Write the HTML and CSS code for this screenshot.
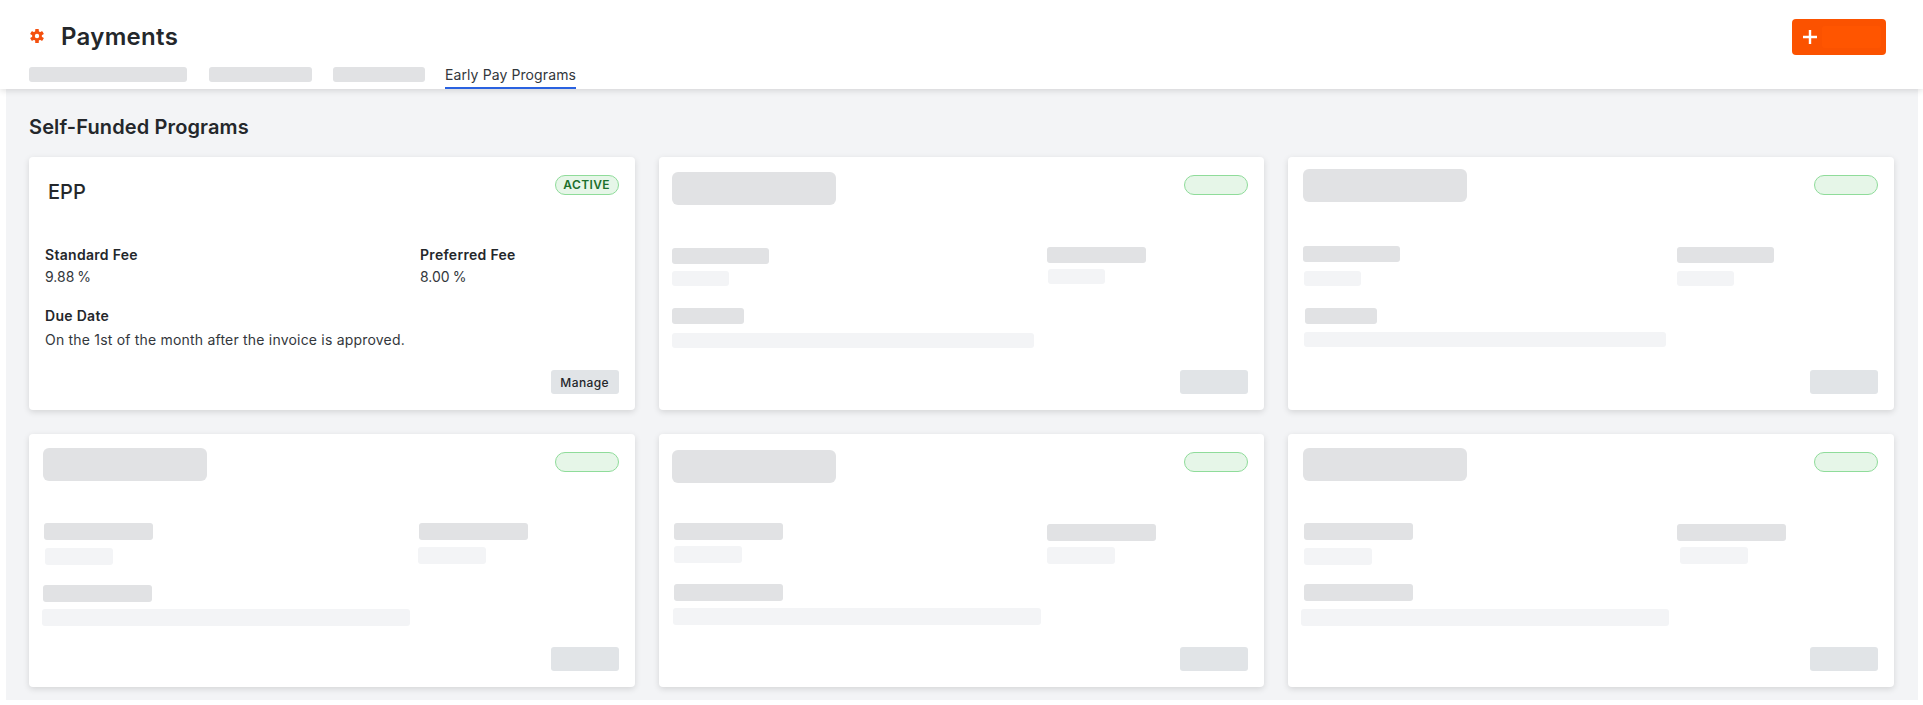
FILE: index.html
```html
<!DOCTYPE html>
<html lang="en">

<head>
    <meta charset="UTF-8">
    <meta name="viewport" content="width=device-width, initial-scale=1.0">
    <title>Payments</title>
    <link rel="stylesheet" href="styles.css">
</head>

<body>

    <div class="header">
        <div class="title-row">
            <svg class="logo" viewBox="0 0 14 14" aria-hidden="true">
                <rect x="5.2" y="0" width="3.6" height="14" rx="0.6"></rect>
                <rect x="5.2" y="0" width="3.6" height="14" rx="0.6" transform="rotate(60 7 7)"></rect>
                <rect x="5.2" y="0" width="3.6" height="14" rx="0.6" transform="rotate(120 7 7)"></rect>
                <circle cx="7" cy="7" r="4.9"></circle>
                <circle class="logo-hole" cx="7" cy="7" r="2.2"></circle>
            </svg>
            <h1>Payments</h1>
            <button class="add-btn">
                <svg viewBox="0 0 14 14" aria-hidden="true">
                    <path d="M7 0v14M0 7h14"></path>
                </svg>
                <span class="add-label"></span>
            </button>
        </div>
        <div class="tabs">
            <span class="sk tab-a"></span>
            <span class="sk tab-b"></span>
            <span class="sk tab-c"></span>
            <span class="tab-active">Early Pay Programs</span>
        </div>
    </div>

    <div class="main">
        <h2>Self-Funded Programs</h2>

        <div class="cards">
            <div class="card">
                <div class="card-top">
                    <div class="card-name">EPP</div>
                    <span class="badge">ACTIVE</span>
                </div>
                <div class="fees">
                    <div>
                        <div class="label">Standard Fee</div>
                        <div class="value">9.88 %</div>
                    </div>
                    <div>
                        <div class="label">Preferred Fee</div>
                        <div class="value">8.00 %</div>
                    </div>
                </div>
                <div class="due">
                    <div class="label">Due Date</div>
                    <div class="value">On the 1st of the month after the invoice is approved.</div>
                </div>
                <div class="card-foot"><button class="manage">Manage</button></div>
            </div>

            <div class="card card-2">
                <div class="card-top">
                    <span class="sk sk-name"></span>
                    <span class="badge"></span>
                </div>
                <div class="fees">
                    <div>
                        <div class="label"><span class="sk sk-l1"></span></div>
                        <div class="value"><span class="sk light sk-v1"></span></div>
                    </div>
                    <div>
                        <div class="label"><span class="sk sk-l2"></span></div>
                        <div class="value"><span class="sk light sk-v2"></span></div>
                    </div>
                </div>
                <div class="due">
                    <div class="label"><span class="sk sk-l3"></span></div>
                    <div class="value"><span class="sk light sk-v3"></span></div>
                </div>
                <div class="card-foot"><button class="manage blank"></button></div>
            </div>

            <div class="card card-3">
                <div class="card-top">
                    <span class="sk sk-name"></span>
                    <span class="badge"></span>
                </div>
                <div class="fees">
                    <div>
                        <div class="label"><span class="sk sk-l1"></span></div>
                        <div class="value"><span class="sk light sk-v1"></span></div>
                    </div>
                    <div>
                        <div class="label"><span class="sk sk-l2"></span></div>
                        <div class="value"><span class="sk light sk-v2"></span></div>
                    </div>
                </div>
                <div class="due">
                    <div class="label"><span class="sk sk-l3"></span></div>
                    <div class="value"><span class="sk light sk-v3"></span></div>
                </div>
                <div class="card-foot"><button class="manage blank"></button></div>
            </div>

            <div class="card card-4">
                <div class="card-top">
                    <span class="sk sk-name"></span>
                    <span class="badge"></span>
                </div>
                <div class="fees">
                    <div>
                        <div class="label"><span class="sk sk-l1"></span></div>
                        <div class="value"><span class="sk light sk-v1"></span></div>
                    </div>
                    <div>
                        <div class="label"><span class="sk sk-l2"></span></div>
                        <div class="value"><span class="sk light sk-v2"></span></div>
                    </div>
                </div>
                <div class="due">
                    <div class="label"><span class="sk sk-l3"></span></div>
                    <div class="value"><span class="sk light sk-v3"></span></div>
                </div>
                <div class="card-foot"><button class="manage blank"></button></div>
            </div>

            <div class="card card-5">
                <div class="card-top">
                    <span class="sk sk-name"></span>
                    <span class="badge"></span>
                </div>
                <div class="fees">
                    <div>
                        <div class="label"><span class="sk sk-l1"></span></div>
                        <div class="value"><span class="sk light sk-v1"></span></div>
                    </div>
                    <div>
                        <div class="label"><span class="sk sk-l2"></span></div>
                        <div class="value"><span class="sk light sk-v2"></span></div>
                    </div>
                </div>
                <div class="due">
                    <div class="label"><span class="sk sk-l3"></span></div>
                    <div class="value"><span class="sk light sk-v3"></span></div>
                </div>
                <div class="card-foot"><button class="manage blank"></button></div>
            </div>

            <div class="card card-6">
                <div class="card-top">
                    <span class="sk sk-name"></span>
                    <span class="badge"></span>
                </div>
                <div class="fees">
                    <div>
                        <div class="label"><span class="sk sk-l1"></span></div>
                        <div class="value"><span class="sk light sk-v1"></span></div>
                    </div>
                    <div>
                        <div class="label"><span class="sk sk-l2"></span></div>
                        <div class="value"><span class="sk light sk-v2"></span></div>
                    </div>
                </div>
                <div class="due">
                    <div class="label"><span class="sk sk-l3"></span></div>
                    <div class="value"><span class="sk light sk-v3"></span></div>
                </div>
                <div class="card-foot"><button class="manage blank"></button></div>
            </div>
        </div>
    </div>

</body>

</html>
```

FILE: styles.css
```css
* {
    box-sizing: border-box;
}

body {
    font-family: Inter, "Liberation Sans", sans-serif;
    color: #24272b;
    background-color: #fff;
    margin: 0;
    height: 705px;
    overflow: hidden;
    display: flex;
    flex-direction: column;
    padding: 0 5px 5px 6px;
}

/* header */
.header {
    position: relative;
    z-index: 1;
    height: 89px;
    margin: 0 -5px 0 -6px;
    padding: 19px 37px 0 29px;
    background-color: #fff;
    box-shadow: 0 2px 6px rgba(0, 0, 0, 0.12);
}

.title-row {
    display: flex;
    align-items: center;
    height: 36px;
}

.logo {
    width: 14px;
    height: 14px;
    margin: -2px 0 0 1px;
    fill: #f4500f;
}

.logo .logo-hole {
    fill: #fff;
}

h1 {
    margin: 0 0 0 17px;
    font-size: 24px;
    line-height: 32px;
    font-weight: 600;
    letter-spacing: 0.3px;
}

.add-btn {
    margin-left: auto;
    width: 94px;
    height: 36px;
    padding: 0 5px 0 11px;
    display: flex;
    align-items: center;
    gap: 5px;
    border: none;
    border-radius: 4px;
    background-color: #fb5200;
}

.add-btn svg {
    width: 14px;
    height: 14px;
    flex-shrink: 0;
}

.add-btn path {
    fill: none;
    stroke: #fff;
    stroke-width: 2.4px;
}

.add-label {
    width: 59px;
    height: 22px;
    border-radius: 3px;
    background-color: #ff5500;
}

.tabs {
    display: flex;
    gap: 21px;
    height: 26px;
    margin-top: 8px;
}

.tab-a,
.tab-b,
.tab-c {
    height: 15px;
    margin-top: 4px;
    border-radius: 4px;
}

.tab-a {
    width: 158px;
    margin-right: 1px;
}

.tab-b {
    width: 103px;
}

.tab-c {
    width: 92px;
    margin-right: -1px;
}

.tab-active {
    width: 131px;
    height: 26px;
    font-size: 14px;
    line-height: 24px;
    text-align: center;
    color: #33373c;
    letter-spacing: 0.1px;
    white-space: nowrap;
    border-bottom: 2px solid #2a62e0;
}

/* placeholders */
.sk {
    display: block;
    border-radius: 3px;
    background-color: #e1e2e4;
}

.sk.light {
    background-color: #f3f4f6;
}

/* main area */
.main {
    flex: 1;
    background-color: #f3f4f6;
    padding: 24px 24px 13px 23px;
}

h2 {
    margin: 0 0 16px;
    font-size: 20px;
    line-height: 28px;
    font-weight: 600;
    letter-spacing: 0.12px;
}

.cards {
    display: grid;
    grid-template-columns: repeat(3, 1fr);
    grid-auto-rows: 253px;
    gap: 24px;
}

.card {
    display: flex;
    flex-direction: column;
    padding: 0 16px 16px;
    background-color: #fff;
    border-radius: 4px;
    box-shadow: 0 2px 6px rgba(0, 0, 0, 0.13);
}

.card-2,
.card-3,
.card-5,
.card-6 {
    padding-left: 17px;
}

.card-top {
    display: flex;
    justify-content: space-between;
    align-items: flex-start;
    height: 88px;
}

.card-name {
    margin: 21px 0 0 3px;
    font-size: 20px;
    line-height: 28px;
    font-weight: 500;
}

.badge {
    width: 64px;
    height: 20px;
    margin-top: 18px;
    border: 1px solid #8fdc9a;
    border-radius: 10px;
    background-color: #e6f6e8;
    color: #1d6f2c;
    font-size: 12px;
    line-height: 18px;
    font-weight: 600;
    letter-spacing: 0.4px;
    text-align: center;
}

.fees {
    display: grid;
    grid-template-columns: 375px 1fr;
}

.label {
    display: flow-root;
    height: 20px;
    font-size: 14px;
    line-height: 20px;
    font-weight: 600;
    letter-spacing: 0.3px;
}

.value {
    display: flow-root;
    height: 20px;
    margin-top: 2px;
    font-size: 14px;
    line-height: 20px;
    letter-spacing: 0.2px;
    color: #33373c;
}

.fees .value {
    letter-spacing: 0;
    word-spacing: -1px;
}

.due {
    margin-top: 19px;
}

.due .value {
    margin-top: 4px;
}

.card-foot {
    margin-top: auto;
    display: flex;
    justify-content: flex-end;
}

.manage {
    width: 68px;
    height: 24px;
    padding: 0;
    border: none;
    border-radius: 3px;
    background-color: #e1e4e7;
    color: #24272b;
    font-family: inherit;
    font-size: 12px;
    font-weight: 500;
    letter-spacing: 0.4px;
}

/* placeholder sizes, they differ a little per card */
.sk-name {
    width: 164px;
    height: 33px;
    border-radius: 6px;
    margin-left: -3.5px;
}

.sk-l1,
.sk-l2,
.sk-l3 {
    height: 16px;
}

.sk-v1,
.sk-v2,
.sk-v3 {
    height: 15px;
}

.card-4 .sk-l1, .card-4 .sk-l2, .card-4 .sk-l3,
.card-5 .sk-l1, .card-5 .sk-l2, .card-5 .sk-l3,
.card-6 .sk-l1, .card-6 .sk-l2, .card-6 .sk-l3,
.card-4 .sk-v1, .card-4 .sk-v2, .card-4 .sk-v3,
.card-5 .sk-v1, .card-5 .sk-v2, .card-5 .sk-v3,
.card-6 .sk-v1, .card-6 .sk-v2, .card-6 .sk-v3 {
    height: 17px;
}

.card-2 .sk-name { margin-top: 15px; }
.card-2 .sk-l1 { width: 97px; margin: 3px 0 0 -3.5px; }
.card-2 .sk-v1 { width: 57px; margin: 4px 0 0 -3.5px; }
.card-2 .sk-l2 { width: 99px; margin: 2px 0 0 -3.5px; }
.card-2 .sk-v2 { width: 57px; margin: 2px 0 0 -2.5px; }
.card-2 .sk-l3 { width: 72px; margin: 2px 0 0 -3.5px; }
.card-2 .sk-v3 { width: 362px; margin: 3px 0 0 -3.5px; }

.card-3 .sk-name { margin: 12px 0 0 -2px; }
.card-3 .sk-l1 { width: 97px; margin: 1px 0 0 -2px; }
.card-3 .sk-v1 { width: 57px; margin: 4px 0 0 -1px; }
.card-3 .sk-l2 { width: 97px; margin: 2px 0 0 -3px; }
.card-3 .sk-v2 { width: 57px; margin: 4px 0 0 -3px; }
.card-3 .sk-l3 { width: 72px; margin-top: 2px; }
.card-3 .sk-v3 { width: 362px; margin: 2px 0 0 -1px; }

.card-4 .sk-name { margin: 14px 0 0 -2px; }
.card-4 .sk-l1 { width: 109px; margin: 1px 0 0 -1px; }
.card-4 .sk-v1 { width: 68px; margin-top: 4px; }
.card-4 .sk-l2 { width: 109px; margin: 1px 0 0 -1px; }
.card-4 .sk-v2 { width: 68px; margin: 3px 0 0 -2px; }
.card-4 .sk-l3 { width: 109px; margin: 2px 0 0 -2px; }
.card-4 .sk-v3 { width: 368px; margin: 2px 0 0 -3px; }

.card-5 .sk-name { margin-top: 16px; }
.card-5 .sk-l1 { width: 109px; margin: 1px 0 0 -1.5px; }
.card-5 .sk-v1 { width: 68px; margin: 2px 0 0 -1.5px; }
.card-5 .sk-l2 { width: 109px; margin: 2px 0 0 -3.5px; }
.card-5 .sk-v2 { width: 68px; margin: 3px 0 0 -3.5px; }
.card-5 .sk-l3 { width: 109px; margin: 1px 0 0 -1.5px; }
.card-5 .sk-v3 { width: 368px; margin: 1px 0 0 -2.5px; }

.card-6 .sk-name { margin: 14px 0 0 -2px; }
.card-6 .sk-l1 { width: 109px; margin: 1px 0 0 -1px; }
.card-6 .sk-v1 { width: 68px; margin: 4px 0 0 -1px; }
.card-6 .sk-l2 { width: 109px; margin: 2px 0 0 -3px; }
.card-6 .sk-v2 { width: 68px; margin-top: 3px; }
.card-6 .sk-l3 { width: 109px; margin: 1px 0 0 -1px; }
.card-6 .sk-v3 { width: 368px; margin: 2px 0 0 -4px; }
```
